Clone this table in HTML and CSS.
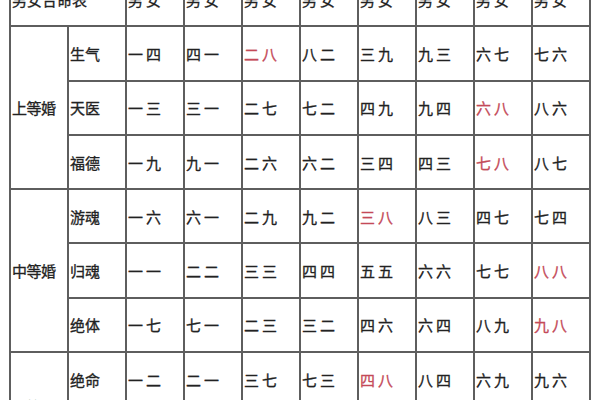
FILE: index.html
```html
<!DOCTYPE html>
<html lang="zh-CN">
<head>
<meta charset="utf-8">
<title>男女合命表</title>
<link rel="stylesheet" href="styles.css">
</head>
<body>
<table class="grid">
  <colgroup>
    <col><col><col><col><col><col><col><col><col><col>
  </colgroup>
  <tr class="head">
    <td colspan="2" class="title">男女合命表</td>
    <td class="pair">男女</td><td class="pair">男女</td><td class="pair">男女</td><td class="pair">男女</td>
    <td class="pair">男女</td><td class="pair">男女</td><td class="pair">男女</td><td class="pair">男女</td>
  </tr>
  <tr>
    <td rowspan="3" class="group">上等婚</td>
    <td class="kind">生气</td>
    <td class="pair">一四</td><td class="pair">四一</td><td class="pair hot">二八</td><td class="pair">八二</td>
    <td class="pair">三九</td><td class="pair">九三</td><td class="pair">六七</td><td class="pair">七六</td>
  </tr>
  <tr>
    <td class="kind">天医</td>
    <td class="pair">一三</td><td class="pair">三一</td><td class="pair">二七</td><td class="pair">七二</td>
    <td class="pair">四九</td><td class="pair">九四</td><td class="pair hot">六八</td><td class="pair">八六</td>
  </tr>
  <tr>
    <td class="kind">福德</td>
    <td class="pair">一九</td><td class="pair">九一</td><td class="pair">二六</td><td class="pair">六二</td>
    <td class="pair">三四</td><td class="pair">四三</td><td class="pair hot">七八</td><td class="pair">八七</td>
  </tr>
  <tr>
    <td rowspan="3" class="group">中等婚</td>
    <td class="kind">游魂</td>
    <td class="pair">一六</td><td class="pair">六一</td><td class="pair">二九</td><td class="pair">九二</td>
    <td class="pair hot">三八</td><td class="pair">八三</td><td class="pair">四七</td><td class="pair">七四</td>
  </tr>
  <tr>
    <td class="kind">归魂</td>
    <td class="pair">一一</td><td class="pair">二二</td><td class="pair">三三</td><td class="pair">四四</td>
    <td class="pair">五五</td><td class="pair">六六</td><td class="pair">七七</td><td class="pair hot">八八</td>
  </tr>
  <tr>
    <td class="kind">绝体</td>
    <td class="pair">一七</td><td class="pair">七一</td><td class="pair">二三</td><td class="pair">三二</td>
    <td class="pair">四六</td><td class="pair">六四</td><td class="pair">八九</td><td class="pair hot">九八</td>
  </tr>
  <tr>
    <td rowspan="2" class="group">下等婚</td>
    <td class="kind">绝命</td>
    <td class="pair">一二</td><td class="pair">二一</td><td class="pair">三七</td><td class="pair">七三</td>
    <td class="pair hot">四八</td><td class="pair">八四</td><td class="pair">六九</td><td class="pair">九六</td>
  </tr>
  <tr>
    <td class="kind">五鬼</td>
    <td class="pair">一八</td><td class="pair">八一</td><td class="pair">三六</td><td class="pair">六三</td>
    <td class="pair">四二</td><td class="pair">二四</td><td class="pair">七九</td><td class="pair">九七</td>
  </tr>
</table>
</body>
</html>
```

FILE: styles.css
```css
html, body {
  margin: 0;
  padding: 0;
  background: #ffffff;
  overflow: hidden;
  width: 600px;
  height: 400px;
}

.grid {
  border-collapse: collapse;
  table-layout: fixed;
  width: 580px;
  margin: -29px 0 0 9px;
  font-family: "Noto Sans CJK SC", "Noto Sans", sans-serif;
  font-size: 15px;
  color: #222222;
  -webkit-text-stroke: 0.3px currentColor;
}

.grid col {
  width: 58px;
}

.grid tr {
  height: 54.3px;
}

.grid td {
  border: 2px solid #5e5e5e;
  padding: 0 0 0 1px;
  vertical-align: middle;
  text-align: left;
  white-space: nowrap;
  line-height: 1;
  overflow: hidden;
}

.title {
  padding-left: 2px;
}

.pair {
  letter-spacing: 3px;
}

.hot {
  color: #c44a58;
}

.group {
  text-align: center;
  letter-spacing: -0.5px;
  padding-left: 3px;
}

.kind {
  text-align: left;
}
```
